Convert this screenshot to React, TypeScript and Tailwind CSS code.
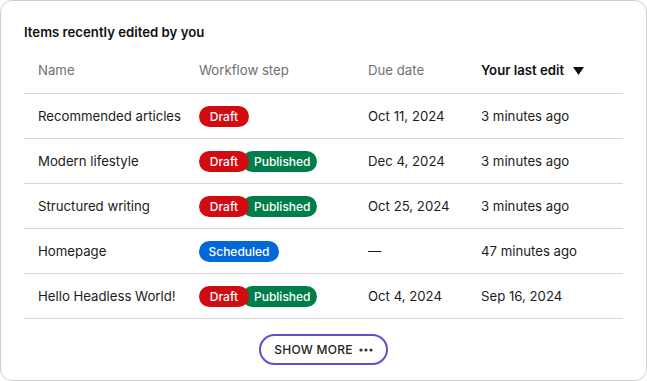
import { Fragment } from "react";

type Step = "Draft" | "Published" | "Scheduled";

interface Item {
  name: string;
  steps: Step[];
  due: string;
  lastEdit: string;
}

const items: Item[] = [
  { name: "Recommended articles", steps: ["Draft"], due: "Oct 11, 2024", lastEdit: "3 minutes ago" },
  { name: "Modern lifestyle", steps: ["Draft", "Published"], due: "Dec 4, 2024", lastEdit: "3 minutes ago" },
  { name: "Structured writing", steps: ["Draft", "Published"], due: "Oct 25, 2024", lastEdit: "3 minutes ago" },
  { name: "Homepage", steps: ["Scheduled"], due: "—", lastEdit: "47 minutes ago" },
  { name: "Hello Headless World!", steps: ["Draft", "Published"], due: "Oct 4, 2024", lastEdit: "Sep 16, 2024" },
];

const badgeStyle: Record<Step, string> = {
  Draft: "bg-[#d20a11] w-[50px] justify-center relative z-10",
  Published: "bg-[#007e4a] w-[75px] -ml-[7px] pl-[12px]",
  Scheduled: "bg-[#0068d9] w-[80px] justify-center",
};

const Badge = ({ step }: { step: Step }) => (
  <span
    className={`${badgeStyle[step]} inline-flex h-[21px] items-center rounded-full text-[12px] font-medium text-white`}
  >
    {step}
  </span>
);

const App = () => {
  return (
    <div className="h-[381px] w-[647px] bg-white font-['Inter',sans-serif]">
      <div className="flex h-full flex-col rounded-[12px] border border-[#cfcfcf] px-[23px] pt-[23px]">
        <h2 className="text-[13.2px] leading-4 font-semibold text-[#111]">Items recently edited by you</h2>

        {/* table */}
        <div className="mt-[9px] w-[599px] text-[13.2px] text-[#1b1b1b]">
          <div className="grid h-[45px] grid-cols-[161px_169px_113px_1fr] items-center border-b border-[#d6d6d6] text-[#707070]">
            <div className="pl-[14px]">Name</div>
            <div className="pl-[14px]">Workflow step</div>
            <div className="pl-[14px]">Due date</div>
            <div className="flex items-center gap-[9px] pl-[14px] font-semibold text-[#111]">
              Your last edit
              <svg width="11" height="8" viewBox="0 0 11 8">
                <path d="M0 0h11L5.5 8z" fill="#111" />
              </svg>
            </div>
          </div>
          {items.map((item) => (
            <div
              key={item.name}
              className="grid h-[45px] grid-cols-[161px_169px_113px_1fr] items-center border-b border-[#d6d6d6] pt-px"
            >
              <div className="pl-[14px]">{item.name}</div>
              <div className="flex pl-[14px]">
                {item.steps.map((s) => (
                  <Fragment key={s}>
                    <Badge step={s} />
                  </Fragment>
                ))}
              </div>
              <div className="pl-[14px]">{item.due}</div>
              <div className="pl-[14px]">{item.lastEdit}</div>
            </div>
          ))}
        </div>

        <div className="mt-[15px] flex w-[599px] justify-center">
          <button className="flex h-[31px] w-[129px] items-center justify-center gap-[6px] rounded-full border-2 border-[#5b50d0] text-[12px] font-medium tracking-[0.02em] text-[#222]">
            SHOW MORE
            <svg width="14" height="4" viewBox="0 0 14 4">
              <circle cx="2" cy="2" r="1.6" fill="#333" />
              <circle cx="7" cy="2" r="1.6" fill="#333" />
              <circle cx="12" cy="2" r="1.6" fill="#333" />
            </svg>
          </button>
        </div>
      </div>
    </div>
  );
};

export default App;
